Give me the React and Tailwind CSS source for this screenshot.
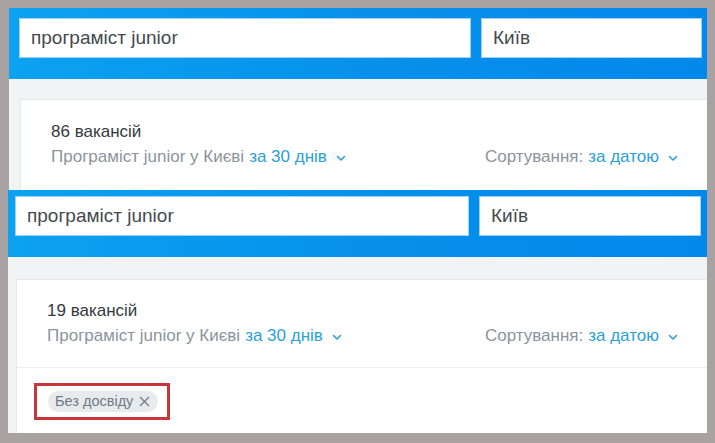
import React from 'react';

const font = { fontFamily: '"Liberation Sans", Arial, sans-serif' };

function Chevron() {
  return (
    <svg width="10" height="7" viewBox="0 0 10 7" className="ml-[9px] mt-[2px]">
      <path d="M1.5 1.5 L5 5 L8.5 1.5" fill="none" stroke="#2b9fd9" strokeWidth="1.6" strokeLinecap="round" strokeLinejoin="round" />
    </svg>
  );
}

function SearchBar({ pad, w1, w2, h }) {
  return (
    <div className={`flex gap-[10px] bg-gradient-to-r from-[#0ba2f0] via-[#0791ec] to-[#0089e9] ${pad} ${h}`}>
      <div className={`${w1} h-[40px] bg-white border border-[#9fd3f5] flex items-center pl-[11px] text-[19px] text-[#45494d]`}>
        програміст junior
      </div>
      <div className={`${w2} h-[40px] bg-white border border-[#9fd3f5] flex items-center pl-[11px] text-[19px] text-[#45494d]`}>
        Київ
      </div>
    </div>
  );
}

function Summary({ count }) {
  return (
    <div className="flex items-end justify-between pr-[29px]">
      <div>
        <div className="text-[17px] leading-[22px] text-[#34393e]">{count} вакансій</div>
        <div className="flex items-center mt-[3px] text-[17px] leading-[22px]">
          <span className="text-[#8b949c]">Програміст junior у Києві</span>
          <span className="text-[#2b9fd9] ml-[5px]">за 30 днів</span>
          <Chevron />
        </div>
      </div>
      <div className="flex items-center text-[17px] leading-[22px]">
        <span className="text-[#8b949c]">Сортування:</span>
        <span className="text-[#2b9fd9] ml-[5px]">за датою</span>
        <Chevron />
      </div>
    </div>
  );
}

export default function App() {
  return (
    <div className="w-[715px] h-[443px] bg-[#a8a2a3] pt-[8px] flex flex-col overflow-hidden" style={font}>
      <div className="ml-[9px] mr-[8px] h-[182px] flex flex-col">
        <SearchBar pad="pt-[10px] pl-[10px] pr-[5px]" w1="w-[452px]" w2="w-[221px]" h="h-[71px]" />
        <div className="bg-[#f2f3f5] flex-1 pt-[20px] pl-[11px] flex flex-col">
          <div className="flex-1 bg-white border-l border-t border-[#e6e9ec] pl-[30px] pt-[21px]">
            <Summary count="86" />
          </div>
        </div>
      </div>
      <div className="ml-[8px] mr-[8px] flex-1 flex flex-col mb-[10px]">
        <SearchBar pad="pt-[6px] pl-[7px] pr-[6px]" w1="w-[454px]" w2="w-[222px]" h="h-[67px]" />
        <div className="bg-[#f2f3f5] flex-1 pt-[22px] pl-[8px] flex flex-col">
          <div className="flex-1 bg-white border-l border-t border-[#e6e9ec] flex flex-col">
            <div className="pl-[30px] pt-[20px] pb-[20px] border-b border-[#eceef0]">
              <Summary count="19" />
            </div>
            <div className="pl-[17px] pt-[15px]">
              <div className="inline-flex border-[3px] border-[#c9363a] pl-[11px] pr-[9px] py-[5px]">
                <div className="flex items-center h-[21px] rounded-full bg-[#e8ebee] pl-[7px] pr-[8px] text-[14.5px] text-[#6f7a84]">
                  Без досвіду
                  <svg width="11" height="11" viewBox="0 0 11 11" className="ml-[6px]">
                    <path d="M1.5 1.5 L9.5 9.5 M9.5 1.5 L1.5 9.5" stroke="#7a838c" strokeWidth="1.5" strokeLinecap="round" />
                  </svg>
                </div>
              </div>
            </div>
          </div>
        </div>
      </div>
    </div>
  );
}
